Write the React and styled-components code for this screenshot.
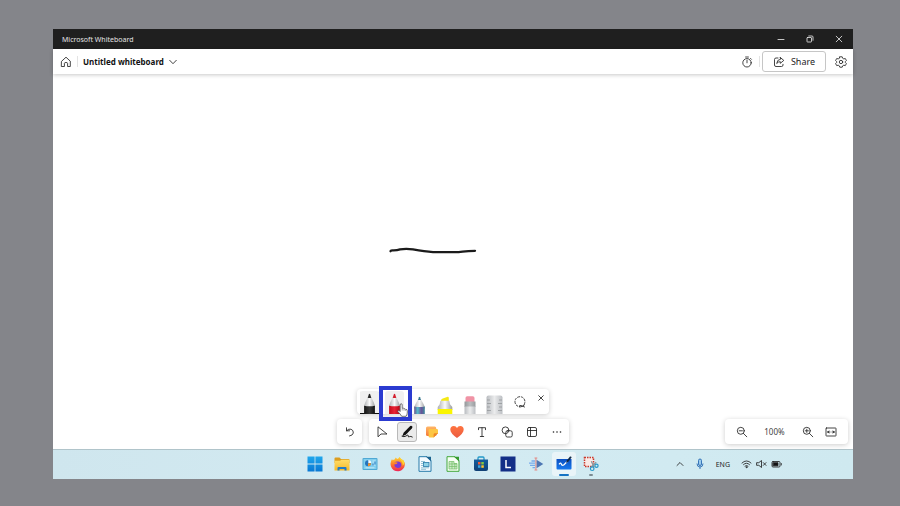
import React from "react";
import styled, { createGlobalStyle } from "styled-components";

const GlobalStyle = createGlobalStyle`
  * { box-sizing: border-box; }
  body {
    margin: 0;
    background: #84858a;
    font-family: "Noto Sans", "Open Sans", sans-serif;
    color: #242424;
  }
  button {
    margin: 0;
    padding: 0;
    border: 0;
    background: none;
    color: inherit;
    font: inherit;
  }
`;

const Desktop = styled.div`
  display: flex;
  min-height: 100vh;
  padding: 29px 47px 27px 53px;
`;

const Screen = styled.div`
  flex: 1;
  min-width: 0;
  display: flex;
  flex-direction: column;
  background: #fff;
`;

const TitleBar = styled.div`
  display: flex;
  align-items: center;
  justify-content: space-between;
  height: 20px;
  padding-left: 9px;
  background: #1f1f1f;
  color: #e4e4e4;
  font-size: 7px;
`;

const WindowControls = styled.div`
  display: flex;
`;

const WindowButton = styled.button`
  display: grid;
  place-items: center;
  width: 29px;
  height: 20px;
`;

const Header = styled.header`
  display: flex;
  align-items: center;
  justify-content: space-between;
  height: 25px;
  padding-left: 6px;
  background: #fff;
  box-shadow: 0 1px 4px rgba(0, 0, 0, 0.22);
  z-index: 1;
`;

const HeaderGroup = styled.div`
  display: flex;
  align-items: center;
  gap: ${(p) => p.$gap};
`;

const Divider = styled.span`
  width: 1px;
  height: 11px;
  background: #e3e3e3;
`;

const IconButton = styled.button`
  display: grid;
  place-items: center;
  width: ${(p) => p.$width || "13px"};
  height: 20px;
`;

const BoardName = styled.button`
  display: flex;
  align-items: center;
  gap: 5px;
  color: #111;
  font-size: 8px;
  font-weight: 700;
`;

const ShareButton = styled.button`
  display: flex;
  align-items: center;
  justify-content: center;
  gap: 6px;
  width: 64px;
  height: 21px;
  border: 1px solid #c6c6c6;
  border-radius: 3px;
  font-size: 9px;
`;

const Canvas = styled.main`
  position: relative;
  flex: 1;
  display: flex;
  flex-direction: column;
  justify-content: flex-end;
  gap: 5px;
  padding: 5px;
`;

const Ink = styled.svg`
  position: absolute;
  left: 42%;
  top: 46%;
  width: 88px;
  height: 9px;
`;

const panel = `
  display: flex;
  align-items: center;
  height: 25px;
  border-radius: 4px;
  background: #fff;
  box-shadow: 0 1px 5px rgba(0, 0, 0, 0.2);
`;

const PenPanel = styled.div`
  ${panel}
  position: relative;
  align-self: center;
`;

const PenButton = styled.button`
  display: flex;
  justify-content: center;
  align-items: flex-end;
  width: 25px;
  height: 25px;
`;

const PenSlot = styled.span`
  display: flex;
  justify-content: center;
  align-items: flex-end;
  width: 19px;
  height: 23px;
  border-radius: 3px 3px 0 0;
  background: ${(p) => (p.$tinted ? "#f0f0f0" : "transparent")};
  box-shadow: ${(p) => (p.$active ? "inset 0 -1px #111" : "none")};
`;

const CloseButton = styled.button`
  display: grid;
  place-items: center;
  align-self: flex-start;
  width: 17px;
  height: 18px;
`;

const Highlight = styled.span`
  position: absolute;
  left: 22px;
  top: -3px;
  width: 33px;
  height: 35px;
  border: 4px solid #2b3bd0;
  z-index: 2;
  pointer-events: none;
`;

const Pointer = styled.svg`
  position: absolute;
  left: 40px;
  top: 14px;
  width: 11px;
  height: 14px;
  z-index: 3;
  pointer-events: none;
`;

const ToolRow = styled.div`
  display: grid;
  grid-template-columns: 1fr auto 1fr;
`;

const ToolGroup = styled.div`
  grid-column: 2;
  display: flex;
  gap: 7px;
`;

const ToolPanel = styled.div`
  ${panel}
`;

const ToolButton = styled.button`
  display: grid;
  place-items: center;
  width: 25px;
  height: 25px;
`;

const ToolFace = styled.span`
  display: grid;
  place-items: center;
  width: 20px;
  height: 20px;
  border-radius: 3px;
  border: 1px solid ${(p) => (p.$active ? "#b9b9b9" : "transparent")};
  background: ${(p) => (p.$active ? "#ebebeb" : "transparent")};
`;

const ZoomPanel = styled.div`
  ${panel}
  justify-self: end;
  width: 123px;
  padding-left: 10px;
`;

const ZoomLevel = styled.span`
  flex: 1;
  text-align: center;
  font-size: 8px;
  color: #444;
`;

const ZoomEnd = styled.div`
  display: flex;
  gap: 10px;
  padding-right: 11px;
`;

const Taskbar = styled.footer`
  display: grid;
  grid-template-columns: 1fr 304px 1fr;
  align-items: center;
  height: 30px;
  box-shadow: inset 0 1px #b0c4ca;
  background: linear-gradient(90deg, #cfe6ee, #d3ebf2 55%, #cfe9f0);
`;

const AppList = styled.nav`
  grid-column: 2;
  display: grid;
  grid-auto-flow: column;
  grid-auto-columns: 1fr;
  justify-items: center;
`;

const AppButton = styled.button`
  position: relative;
  display: grid;
  place-items: center;
  width: 24px;
  height: 24px;
  border-radius: 3px;
  background: ${(p) => (p.$open ? "#e9f4f8" : "transparent")};
`;

const RunMark = styled.span`
  position: absolute;
  bottom: 0;
  width: ${(p) => (p.$wide ? "10px" : "4px")};
  height: 2px;
  border-radius: 1px;
  background: ${(p) => (p.$wide ? "#1573c4" : "#7b8b92")};
`;

const Tray = styled.div`
  justify-self: end;
  display: flex;
  align-items: center;
  margin-right: 71px;
  font-size: 7px;
`;

const TrayButton = styled.button`
  display: flex;
  align-items: center;
  justify-content: center;
  gap: 4px;
  height: 20px;
  min-width: 12px;
  margin-left: ${(p) => p.$gap || "0"};
`;

const LineSvg = styled.svg`
  display: block;
  fill: none;
  stroke: currentColor;
  stroke-width: 0.85;
  stroke-linecap: round;
  stroke-linejoin: round;
`;

const ArtSvg = styled.svg`
  display: block;
`;

const Line = ({ w = 12, h = 12, children }) => (
  <LineSvg width={w} height={h} viewBox={`0 0 ${w} ${h}`} aria-hidden="true">{children}</LineSvg>
);
const Art = ({ w = 16, h = 16, children }) => (
  <ArtSvg width={w} height={h} viewBox={`0 0 ${w} ${h}`} aria-hidden="true">{children}</ArtSvg>
);

const Barrel = ({ tip, band }) => (
  <Art w={11} h={21}>
    <path d="M4.2 3.5H6.8L9.8 9.5Q11 12.5 11 14H0Q0 12.5 1.2 9.5Z" fill="url(#barrel)" />
    <path d="M3.7 4.7 4.8 1.4Q5.5.2 6.2 1.4L7.3 4.7Q5.5 5.4 3.7 4.7Z" fill={tip} />
    <path d="M.1 12.7Q5.5 13.9 10.9 12.7V21H.1Z" fill={band} />
  </Art>
);

const pens = [
  { name: "Black pen", tinted: true, active: true, art: <Barrel tip="#252525" band="url(#blackBand)" /> },
  { name: "Red pen", tinted: true, art: <Barrel tip="#d4202e" band="url(#redBand)" /> },
  {
    name: "Galaxy pen",
    art: (
      <Art w={11} h={18}>
        <path d="M4.3 3H6.7L9.5 8Q11 11 11 12.5H0Q0 11 1.5 8Z" fill="url(#barrel)" />
        <path d="M4 4 5 1.2Q5.5.3 6 1.2L7 4Z" fill="#34758e" />
        <path d="M.2 10.5Q5.5 11.6 10.8 10.5V18H.2Z" fill="url(#galaxy)" />
      </Art>
    ),
  },
  {
    name: "Highlighter",
    art: (
      <Art w={16} h={18}>
        <path d="M4 4.8Q4 3 5.8 2.5L10 .9Q11.8.3 11.8 2V6H4Z" fill="#f4e916" />
        <path d="M3.3 4.8H12.3L13 8.3 15.3 11V14H.7V11L2.7 8.3Z" fill="url(#barrel)" />
        <path d="M.7 13H15.3V18H.7Z" fill="#faf500" />
      </Art>
    ),
  },
  {
    name: "Eraser",
    art: (
      <Art w={12} h={18}>
        <path d="M1.5 6V2Q1.5.3 3.2.3H8.8Q10.5.3 10.5 2V6Z" fill="#f093a5" />
        <path d="M.5 5.5H11.5V11H.5Z" fill="url(#metal)" />
        <path d="M.5 10.5H11.5V18H.5Z" fill="url(#ruler)" />
      </Art>
    ),
  },
  {
    name: "Ruler",
    art: (
      <Art w={17} h={19}>
        <path d="M.5 19V2.5Q.5.5 2.5.5H14.5Q16.5.5 16.5 2.5V19Z" fill="url(#ruler)" />
        <path d="M1 5H4M1 8.5H5M1 12H4M1 15.5H5M16 5H13M16 8.5H12M16 12H13M16 15.5H12" stroke="#8d9094" strokeWidth=".7" />
      </Art>
    ),
  },
];

const tools = [
  { name: "Select", art: <Line><path d="M2 1.2V10.8L5 8H10.6Z" /></Line> },
  {
    name: "Inking",
    active: true,
    art: (
      <Art w={14} h={14}>
        <path d="M10.2 1.1Q11.4.4 12.2 1.5 12.8 2.5 11.8 3.6L5.8 9.8 2.3 11.3 3.6 7.7Z" fill="#111" />
        <path d="M2 11.3Q4.2 12.3 6 11 8.5 9 8.2 10.8 8 12.6 9.6 11.6 10.6 11 12.3 12" fill="none" stroke="#111" strokeWidth=".9" strokeLinecap="round" />
      </Art>
    ),
  },
  {
    name: "Notes",
    art: (
      <Art w={14} h={14}>
        <path d="M2.5 1.5H9.7Q11.2 1.5 11.2 3V11H2.5Q1 11 1 9.5V3Q1 1.5 2.5 1.5Z" fill="url(#note)" />
        <path d="M4.8 4H11.8Q13 4 13 5.2V8.3L8.8 12.5H4.8Q3.6 12.5 3.6 11.3V5.2Q3.6 4 4.8 4Z" fill="#fdc643" />
        <path d="M8.6 12.5V9.7Q8.6 8.3 10 8.3H13Z" fill="#ee8528" />
      </Art>
    ),
  },
  {
    name: "Reactions",
    art: (
      <Art w={14} h={14}>
        <path d="M7 13Q.3 8.3.3 4.5.4 1.1 3.7 1 6 .9 7 3 8 .9 10.3 1 13.6 1.1 13.7 4.5 13.7 8.3 7 13Z" fill="url(#heart)" />
      </Art>
    ),
  },
  { name: "Text", art: <Line><path d="M2.5 3.7V1.7H9.5V3.7M6 1.7V10.5M4.3 10.5H7.7" /></Line> },
  {
    name: "Shapes",
    art: <Line><circle cx="4.5" cy="4.3" r="3.4" /><rect x="4.8" y="4.8" width="6.4" height="6.2" rx="1.5" fill="#fff" /><path d="M7.8 4.8Q7.5 7.5 4.8 7.7" /></Line>,
  },
  { name: "Templates", art: <Line><rect x="1.5" y="1.5" width="9" height="9" rx="1.5" /><path d="M4.5 1.5V10.5M4.5 4.5H10.5M1.5 4.5H4.5" /></Line> },
  { name: "More options", art: <Art w={12} h={12}><g fill="#222"><circle cx="2.5" cy="6" r=".8" /><circle cx="6" cy="6" r=".8" /><circle cx="9.5" cy="6" r=".8" /></g></Art> },
];

const apps = [
  {
    name: "Start",
    art: <Art><path d="M.5.5H7.6V7.6H.5ZM8.4.5H15.5V7.6H8.4ZM.5 8.4H7.6V15.5H.5ZM8.4 8.4H15.5V15.5H8.4Z" fill="url(#win)" /></Art>,
  },
  {
    name: "File Explorer",
    art: <Art><path d="M.5 2.5Q.5 1.5 1.5 1.5H5.5L7 3H14.5Q15.5 3 15.5 4V7H.5Z" fill="#dc9e20" /><path d="M.5 4.8H6L7.5 3.8H15.5V14.5H.5Z" fill="url(#folder)" /><path d="M3.5 14.5V12Q3.5 11 4.5 11H11.5Q12.5 11 12.5 12V14.5H10.5V13H5.5V14.5Z" fill="#217bc8" /></Art>,
  },
  {
    name: "Control Panel",
    art: <Art><rect x=".5" y="2" width="15" height="12" rx="1" fill="#4fa8d4" /><rect x="1.5" y="3" width="13" height="10" fill="#82cfee" /><circle cx="6" cy="7.3" r="3" fill="#2475bd" /><path d="M6.3 7V4A3 3 0 0 1 9.3 7Z" fill="#f6fbff" /><path d="M6 7.3H9A3 3 0 0 1 6 10.3Z" fill="#f09432" /><path d="M10.5 5H13.5M10.5 7H13.5M10.5 9H13.5M3.5 11.8H12.5" stroke="#dff5fc" strokeWidth=".7" /><path d="M11 9.5V7.5M13 8.5V5.5" stroke="#2475bd" /></Art>,
  },
  {
    name: "Firefox",
    art: <Art><path d="M4.6 3.4 5.7 1.5Q6.7 2 7 3 8.5 3 9.4 1L11 3 13.5 4.5Q15.8 8 14.1 11.6 11.8 15.4 8 15.3 3 15.3 1.1 10.8-.4 6.8 2 3L2.7 4.2Q3.6 3.3 4.6 3.4Z" fill="url(#fire)" /><path d="M4.4 6.7Q6.3 5 8.4 5.6 11.6 6.4 11.3 9.4 10.5 12.3 7.7 12 4.4 11.5 4.3 8.5L6.7 8 7.7 6.8Q5.6 6 4.4 6.7Z" fill="#793bd4" /><path d="M9.4 1Q9.3 3.3 11.4 5.2 13.3 7.1 12.7 9.8 15.4 7.5 13.5 4.5L11.1 3Z" fill="#ffd42d" /></Art>,
  },
  {
    name: "Writer",
    art: <Art><path d="M2 .7H10L14 4.7V15.3H2Z" fill="#f4fbff" stroke="#267ba9" /><path d="M9 .7H14V5.5Z" fill="#1b638f" /><path d="M4 5.5H8M4 7.5H6.5M4 9.5H6.5M4 11.8H12M4 13.3H9" stroke="#69a9c2" strokeWidth=".7" /><rect x="6.5" y="6.5" width="5.5" height="4" fill="#8dd2e6" stroke="#267ba9" strokeWidth=".8" /></Art>,
  },
  {
    name: "Calc",
    art: <Art><path d="M2 .7H10L14 4.7V15.3H2Z" fill="#f6fff4" stroke="#43a83b" /><path d="M9 .7H14V5.5Z" fill="#369b2e" /><path d="M4 5.5H9V7.5H12V13H4ZM4 8H12M4 10.5H12M7 5.5V13M9.8 7.5V13" fill="#cdeac8" stroke="#72bf69" strokeWidth=".7" /></Art>,
  },
  {
    name: "Microsoft Store",
    art: <Art><path d="M5 4V2Q5 1 6 1H10Q11 1 11 2V4" fill="none" stroke="#2399c9" strokeWidth="1.3" /><path d="M1 3.5H15V13Q15 15 13 15H3Q1 15 1 13Z" fill="url(#store)" /><path d="M5 6H7.5V8.5H5Z" fill="#f15b37" /><path d="M8.3 6H10.8V8.5H8.3Z" fill="#84c83f" /><path d="M5 9.3H7.5V11.8H5Z" fill="#39a7e4" /><path d="M8.3 9.3H10.8V11.8H8.3Z" fill="#ffc62e" /></Art>,
  },
  {
    name: "L",
    art: <Art><rect x=".5" y=".5" width="15" height="15" fill="#132f87" /><path d="M6 4V11.5H11" fill="none" stroke="#fff" strokeWidth="1.5" /></Art>,
  },
  {
    name: "Media tool",
    art: <Art><path d="M8.5 3.8 15.3 8 8.5 12.2Z" fill="#4e77b3" /><path d="M3.5 5H7M1 7.2H7M2 9.4H7M4.5 11.6H7" stroke="#78aceb" strokeWidth="1.3" /><path d="M6.5 2H9.3M7.9 2V14M6.5 14H9.3" stroke="#e48782" strokeWidth="1" /></Art>,
  },
  {
    name: "Whiteboard",
    open: true,
    mark: "wide",
    art: <Art><path d="M.5 3H15.5V12.5Q15.5 13.5 14.5 13.5H1.5Q.5 13.5.5 12.5Z" fill="url(#board)" /><path d="M3 8.3Q4.5 6.2 5.3 8 6 10.2 8 8.7L11 5.8" fill="none" stroke="#fff" strokeWidth="1.2" /><path d="M10 7 10.8 4.6 14 .5Q15.5.2 15.6 1.6L12.2 5.8Z" fill="#142a46" /></Art>,
  },
  {
    name: "Snipping Tool",
    mark: "small",
    art: <Art><rect x="1.5" y="1.5" width="9" height="9" fill="#fbeae6" stroke="#cb3729" strokeWidth="1.5" strokeDasharray="1.5 1" /><path d="M8.3 5.2 11 11M13.2 6.2 8.2 11" stroke="#89979e" strokeWidth="1.3" /><circle cx="9.2" cy="12.7" r="1.8" fill="none" stroke="#2798c9" strokeWidth="1.2" /><circle cx="13.5" cy="9.8" r="1.6" fill="none" stroke="#2798c9" strokeWidth="1.2" /></Art>,
  },
];

const gradients = [
  ["barrel", "h", ["#aeb0b2", "#fafafa", "#9c9ea0"]],
  ["blackBand", "h", ["#151515", "#393939", "#111"]],
  ["redBand", "h", ["#c50c1b", "#e92435", "#b80615"]],
  ["galaxy", "h", ["#695391", "#54bdca", "#6b5199", "#3c899b"]],
  ["metal", "h", ["#94979a", "#bcbfc1", "#999c9f"]],
  ["ruler", "h", ["#b9bcc0", "#ebeced", "#bcbfc3"]],
  ["note", "v", ["#ffb768", "#f57938"]],
  ["heart", "v", ["#ff7440", "#ea5b41"]],
  ["win", "v", ["#20a7ec", "#0878d4"]],
  ["folder", "v", ["#ffdd68", "#f5b92a"]],
  ["fire", "v", ["#ffd432", "#ff7c28", "#ee245a"]],
  ["store", "v", ["#155d9c", "#104075"]],
  ["board", "v", ["#0b4fc0", "#1678ed"]],
];

const Gradients = () => (
  <defs>
    {gradients.map(([id, dir, colors]) => (
      <linearGradient key={id} id={id} x2={dir === "h" ? "1" : "0"} y2={dir === "v" ? "1" : "0"}>
        {colors.map((c, i) => <stop key={i} offset={i / (colors.length - 1)} stopColor={c} />)}
      </linearGradient>
    ))}
  </defs>
);

export default function App() {
  return (
    <>
      <GlobalStyle />
      <Desktop>
        <Screen>
          <TitleBar>
            <span>Microsoft Whiteboard</span>
            <WindowControls>
              <WindowButton aria-label="Minimize"><Line w={8} h={8}><path d="M1 4.5H7" /></Line></WindowButton>
              <WindowButton aria-label="Restore"><Line w={8} h={8}><rect x="1" y="2.5" width="4.5" height="4.5" rx=".5" /><path d="M2.7 1H6Q7 1 7 2V5.3" /></Line></WindowButton>
              <WindowButton aria-label="Close"><Line w={8} h={8}><path d="M1.2 1.2 6.8 6.8M6.8 1.2 1.2 6.8" /></Line></WindowButton>
            </WindowControls>
          </TitleBar>
          <Header>
            <HeaderGroup $gap="5px">
              <IconButton aria-label="Home"><Line><path d="M1.7 5.2 6 1.2 10.3 5.2V10.5H7.6V7.3Q7.6 6.5 6 6.5T4.4 7.3V10.5H1.7Z" /></Line></IconButton>
              <Divider />
              <BoardName>
                Untitled whiteboard
                <Line w={8} h={8}><path d="M.7 2.3 4 5.7 7.3 2.3" strokeWidth=".8" /></Line>
              </BoardName>
            </HeaderGroup>
            <HeaderGroup $gap="2px">
              <IconButton aria-label="Timer" $width="21px"><Line><circle cx="6" cy="6.8" r="4.2" /><path d="M4.6 1H7.4M6 4.2V6.8M9.5 2.4 10.4 3.3" /></Line></IconButton>
              <Divider />
              <ShareButton>
                <Line><path d="M5 2H3Q1.5 2 1.5 3.5V9Q1.5 10.5 3 10.5H8.5Q10 10.5 10 9V8.3M7.3 1.5 10.8 4.4 7.3 7.3V5.7Q5.3 5.5 3.7 7.5 4 3.6 7.3 3.2Z" /></Line>
                Share
              </ShareButton>
              <IconButton aria-label="Settings" $width="25px">
                <Line><path d="M4.8.8H7.2L7.7 2.3 8.8 2.9 10.3 2.5 11.4 4.5 10.4 5.5V6.6L11.4 7.6 10.3 9.6 8.8 9.2 7.7 9.8 7.2 11.2H4.8L4.3 9.8 3.2 9.2 1.7 9.6.6 7.6 1.6 6.6V5.5L.6 4.5 1.7 2.5 3.2 2.9 4.3 2.3Z" /><circle cx="6" cy="6" r="1.7" /></Line>
              </IconButton>
            </HeaderGroup>
          </Header>
          <Canvas>
            <Ink viewBox="0 0 88 9" role="img" aria-label="Ink stroke">
              <Gradients />
              <path d="M1.5 4.3Q1.5 3.3 4 3.4 8 3.5 11 2.4 17 1.3 24 2.4C30 3.5 36 4.6 44 5.1H66C74 5 74 3.8 86 3.8" fill="none" stroke="#1b1b1b" strokeWidth="2.3" strokeLinecap="round" />
            </Ink>
            <PenPanel>
              {pens.map((p) => (
                <PenButton key={p.name} aria-label={p.name}>
                  <PenSlot $tinted={p.tinted} $active={p.active}>{p.art}</PenSlot>
                </PenButton>
              ))}
              <ToolButton aria-label="Lasso select">
                <Line><path d="M3.8 10.2A5 5 0 1 1 10.2 8.3" strokeDasharray="2 1.6" /><path d="M5.4 11Q4.9 8.8 7 9.5L10.5 11M6.3 11Q8.2 11 10.5 8.8" /></Line>
              </ToolButton>
              <CloseButton aria-label="Close pens"><Line w={6} h={6}><path d="M.7.7 5.3 5.3M5.3.7.7 5.3" /></Line></CloseButton>
              <Highlight />
              <Pointer viewBox="0 0 11 14" aria-hidden="true">
                <path d="M3.2 8.5V2Q3.2.7 4.2.7T5.2 2V5.3Q6.5 4.7 7 5.8 8.1 5.3 8.6 6.4 10.3 6 10.3 7.8V10Q10 12 9 13.3H4.7Q3.7 11.3 1 8.7.4 7.6 1.5 7.4 2.4 7.4 3.2 8.5Z" fill="#fff" stroke="#555" strokeWidth=".8" />
                <path d="M5.2 5.5V7.5M7 6V7.7M8.7 6.5V8" stroke="#777" strokeWidth=".6" />
              </Pointer>
            </PenPanel>
            <ToolRow>
              <ToolGroup>
                <ToolPanel>
                  <ToolButton aria-label="Undo"><Line><path d="M2.5 1.8V4.8H5.5M2.7 4.6Q4.8 2.5 7 3.2 9.6 4.2 9.3 7 8.8 9.5 5.5 10" /></Line></ToolButton>
                </ToolPanel>
                <ToolPanel>
                  {tools.map((t) => (
                    <ToolButton key={t.name} aria-label={t.name}>
                      <ToolFace $active={t.active}>{t.art}</ToolFace>
                    </ToolButton>
                  ))}
                </ToolPanel>
              </ToolGroup>
              <ZoomPanel>
                <IconButton aria-label="Zoom out"><Line><circle cx="4.8" cy="4.8" r="3.5" /><path d="M7.4 7.4 10.8 10.8M3.2 4.8H6.4" /></Line></IconButton>
                <ZoomLevel>100%</ZoomLevel>
                <ZoomEnd>
                  <IconButton aria-label="Zoom in"><Line><circle cx="4.8" cy="4.8" r="3.5" /><path d="M7.4 7.4 10.8 10.8M3.2 4.8H6.4M4.8 3.2V6.4" /></Line></IconButton>
                  <IconButton aria-label="Fit to screen"><Line><rect x="1" y="2" width="10" height="8" rx=".5" /><path d="M2.8 6H5M2.8 6 4 5M2.8 6 4 7M9.2 6H7M9.2 6 8 5M9.2 6 8 7" /></Line></IconButton>
                </ZoomEnd>
              </ZoomPanel>
            </ToolRow>
          </Canvas>
          <Taskbar>
            <AppList aria-label="Taskbar apps">
              {apps.map((a) => (
                <AppButton key={a.name} aria-label={a.name} $open={a.open}>
                  {a.art}
                  {a.mark && <RunMark $wide={a.mark === "wide"} />}
                </AppButton>
              ))}
            </AppList>
            <Tray>
              <TrayButton aria-label="Show hidden icons"><Line w={8} h={8}><path d="M1 5.5 4 2.5 7 5.5" /></Line></TrayButton>
              <TrayButton aria-label="Microphone" $gap="8px">
                <Art w={8} h={12}><rect x="2.5" y="1" width="3" height="6.5" rx="1.5" fill="#9bcbed" stroke="#2769b2" strokeWidth=".9" /><path d="M1 5.5Q1 9 4 9T7 5.5M4 9V11" fill="none" stroke="#2769b2" strokeWidth=".9" /></Art>
              </TrayButton>
              <TrayButton $gap="10px">ENG</TrayButton>
              <TrayButton aria-label="Network, volume and battery" $gap="11px">
                <Line w={11} h={10}><path d="M1 4Q5.5-.3 10 4M2.5 5.6Q5.5 2.7 8.5 5.6M4 7.1Q5.5 5.7 7 7.1" /><circle cx="5.5" cy="8.2" r=".5" /></Line>
                <Line w={11} h={10}><path d="M1 3.7H2.8L5.5 1.5V8.5L2.8 6.3H1ZM7.3 3.6 10 6.4M10 3.6 7.3 6.4" /></Line>
                <Line w={11} h={10}><rect x="1" y="2.5" width="8" height="5.5" rx="1" /><rect x="2.2" y="3.7" width="4.8" height="3.1" fill="#111" /><path d="M10.3 4.5V6" /></Line>
              </TrayButton>
            </Tray>
          </Taskbar>
        </Screen>
      </Desktop>
    </>
  );
}
